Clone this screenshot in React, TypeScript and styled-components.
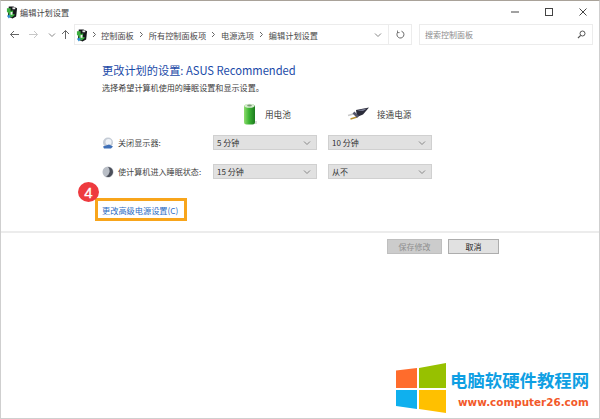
import React from 'react';
import styled, { createGlobalStyle } from 'styled-components';

const GlobalStyle = createGlobalStyle`
  html, body {
    margin: 0;
    padding: 0;
    background: #fff;
  }
  * {
    box-sizing: border-box;
  }
`;

const cjk = `"Noto Sans CJK SC", "Liberation Sans", sans-serif`;

const Window = styled.div`
  position: relative;
  width: 600px;
  height: 419px;
  overflow: hidden;
  background: #fff;
  border: 1px solid #cfcfcf;
  border-top-color: #a9a299;
  font-family: ${cjk};
  font-size: 8px;
  color: #333;
`;

const TitleBar = styled.div`
  display: flex;
  align-items: center;
  height: 21px;
  padding-left: 5px;
  gap: 2px;
  font-size: 8.2px;
  color: #444;
`;

const TitleText = styled.span`
  flex: 1;
`;

const WinButton = styled.div`
  display: flex;
  align-items: center;
  justify-content: center;
  width: 32px;
  height: 21px;
  svg {
    display: block;
  }
`;

const NavBar = styled.div`
  display: flex;
  align-items: center;
  height: 21px;
  margin-top: 2px;
`;

const NavArrows = styled.div`
  display: flex;
  align-items: center;
  width: 73px;
  padding-left: 7px;
`;

const NavArrow = styled.div<{ $w: number }>`
  display: flex;
  align-items: center;
  justify-content: center;
  width: ${(p) => p.$w}px;
`;

const AddressBox = styled.div`
  display: flex;
  align-items: center;
  width: 338px;
  height: 21px;
  padding-left: 1px;
  border: 1px solid #ececec;
`;

const Crumbs = styled.div`
  display: flex;
  flex: 1;
  align-items: center;
  color: #4a4a4a;
`;

const Crumb = styled.span`
  font-size: 8.2px;
  white-space: nowrap;
`;

const CrumbSep = styled.div<{ $first?: boolean }>`
  display: flex;
  justify-content: center;
  width: ${(p) => (p.$first ? 13 : 15)}px;
`;

const Chevron = styled.div`
  display: flex;
  justify-content: center;
  width: 20px;
`;

const Refresh = styled.div`
  display: flex;
  align-items: center;
  justify-content: center;
  width: 23px;
  height: 100%;
  border-left: 1px solid #ececec;
`;

const SearchBox = styled.div`
  display: flex;
  align-items: center;
  justify-content: space-between;
  width: 174px;
  height: 21px;
  margin-left: 7px;
  padding: 0 6px 0 5px;
  border: 1px solid #ececec;
  font-size: 8px;
  color: #8b8b8b;
`;

const Main = styled.main`
  padding: 17px 0 0 101px;
`;

const Heading = styled.h1`
  margin: 0;
  font-family: ${cjk};
  font-size: 11.2px;
  font-weight: 400;
  line-height: 16px;
  color: #1a4aa8;
`;

const Subtitle = styled.p`
  margin: 4px 0 0;
  font-size: 8.1px;
  line-height: 12px;
  color: #3c3c3c;
`;

const SettingsGrid = styled.div`
  display: grid;
  grid-template-columns: 100px 104px 104px;
  column-gap: 11px;
  margin-top: 9px;
`;

const Spacer = styled.div``;

const PowerHead = styled.div<{ $indent: number }>`
  display: flex;
  align-items: center;
  height: 22px;
  padding-left: ${(p) => p.$indent}px;
  gap: 7px;
  font-size: 8.6px;
  color: #444;
  white-space: nowrap;
`;

const RowLabel = styled.div<{ $first?: boolean }>`
  display: flex;
  align-items: center;
  height: 15px;
  margin-top: ${(p) => (p.$first ? 10 : 14)}px;
  gap: 4px;
  font-size: 8.1px;
  color: #444;
  white-space: nowrap;
`;

const Select = styled.div<{ $first?: boolean }>`
  display: flex;
  align-items: center;
  justify-content: space-between;
  height: 15px;
  margin-top: ${(p) => (p.$first ? 10 : 14)}px;
  padding: 0 5px 0 3px;
  background: #e1e1e1;
  border: 1px solid #d0d0d0;
  font-size: 8px;
  color: #333;
`;

const LinkBox = styled.div`
  position: relative;
  display: flex;
  align-items: center;
  width: 92px;
  height: 23px;
  margin: 19px 0 0 -7px;
  padding-left: 4px;
  border: 3px solid #f8a51b;
`;

const AdvancedLink = styled.a`
  font-size: 8.2px;
  color: #2b6cc4;
  white-space: nowrap;
`;

const Badge = styled.div`
  position: absolute;
  left: -20px;
  top: -19px;
  display: flex;
  align-items: center;
  justify-content: center;
  width: 21px;
  height: 20px;
  border-radius: 50%;
  background: #ee3a3f;
  color: #fff;
  font-family: "Liberation Sans", sans-serif;
  font-size: 15px;
  font-weight: 400;
  -webkit-text-stroke: 0.3px #fff;
`;

const Divider = styled.div`
  height: 2px;
  margin-top: 10px;
  background: #ececec;
`;

const Footer = styled.div`
  display: flex;
  justify-content: flex-end;
  gap: 6px;
  padding: 6px 100px 0 0;
`;

const Button = styled.button<{ $disabled?: boolean }>`
  width: ${(p) => (p.$disabled ? 55 : 51)}px;
  height: 15px;
  padding: 0;
  font-family: ${cjk};
  font-size: 8px;
  line-height: 13px;
  background: ${(p) => (p.$disabled ? '#cccccc' : '#e1e1e1')};
  border: 1px solid ${(p) => (p.$disabled ? '#bfbfbf' : '#adadad')};
  color: ${(p) => (p.$disabled ? '#8f8f8f' : '#222')};
`;

const Watermark = styled.div`
  position: absolute;
  right: 8px;
  bottom: 5px;
  display: flex;
  align-items: center;
  gap: 4px;
`;

const WatermarkText = styled.div`
  display: flex;
  flex-direction: column;
  width: 141px;
`;

const WatermarkTitle = styled.div`
  font-size: 17.4px;
  font-weight: 700;
  line-height: 22px;
  color: #0f9fe3;
  white-space: nowrap;
`;

const WatermarkUrl = styled.div`
  margin: 5px 0 0 8px;
  font-family: "DejaVu Sans", sans-serif;
  font-size: 10.4px;
  font-weight: 700;
  line-height: 12px;
  color: #f2592a;
  white-space: nowrap;
`;

const PowerIcon = () => (
  <svg width="12" height="14" viewBox="0 0 13 14">
    <path d="M3 1h5l4 2-1 9-4 2-5-2z" fill="#15171a" />
    <path d="M1 3h4v3l3-1-1 4 3 1-4 3-3-2V8L1 7z" fill="#3cae3f" />
    <path d="M7 2h3v2H7z" fill="#e8e8e8" />
    <path d="M5 7h2v3H5z" fill="#f4f4f4" />
    <path d="M1 11l3-1 1 2-2 2z" fill="#2f8fd0" />
  </svg>
);

const SmallChevron = ({ color = '#888' }: { color?: string }) => (
  <svg width="8" height="6" viewBox="0 0 8 6">
    <path d="M1 1.5L4 4.5 7 1.5" fill="none" stroke={color} strokeWidth="1" />
  </svg>
);

const CrumbArrow = () => (
  <svg width="5" height="7" viewBox="0 0 5 7">
    <path d="M1 1l2.5 2.5L1 6" fill="none" stroke="#666" strokeWidth="1" />
  </svg>
);

const Arrow = ({ color, flip, up }: { color: string; flip?: boolean; up?: boolean }) => (
  <svg
    width="11"
    height="11"
    viewBox="0 0 11 11"
    style={{ transform: up ? 'rotate(90deg)' : flip ? 'scaleX(-1)' : undefined }}
  >
    <path d="M10 5.5H1.5M5 2L1.5 5.5 5 9" fill="none" stroke={color} strokeWidth="1" />
  </svg>
);

const BatteryIcon = () => (
  <svg width="15" height="22" viewBox="0 0 15 22">
    <defs>
      <linearGradient id="batt" x1="0" x2="1" y1="0" y2="0">
        <stop offset="0" stopColor="#8fdc6e" />
        <stop offset="0.45" stopColor="#3db534" />
        <stop offset="1" stopColor="#1c7a1e" />
      </linearGradient>
    </defs>
    <rect x="1" y="1.5" width="11" height="20" rx="2.5" fill="url(#batt)" />
    <ellipse cx="6.5" cy="2.8" rx="5" ry="2" fill="#d6edcf" />
    <ellipse cx="6.5" cy="2.4" rx="2.4" ry="1" fill="#7d9a78" />
    <rect x="12" y="18" width="2" height="3" fill="#dcdcdc" />
  </svg>
);

const PlugIcon = () => (
  <svg width="23" height="17" viewBox="0 0 23 17">
    <path d="M9 4L22 1.5 16 8.5 10 11z" fill="#2b2c3a" />
    <path d="M10 4.5L20 2.5 16 5z" fill="#7c7f96" />
    <path d="M10 11L3.5 13" stroke="#b9912f" strokeWidth="1.4" />
    <path d="M8 7.5L1 9.5" stroke="#c9c9c9" strokeWidth="1.4" />
    <path d="M6.5 6.5L11 11" stroke="#55566a" strokeWidth="2.6" />
  </svg>
);

const MonitorIcon = () => (
  <svg width="12" height="12" viewBox="0 0 12 12">
    <circle cx="6" cy="5.5" r="5" fill="#c5ccd6" />
    <circle cx="6.5" cy="5" r="3" fill="#eef2f7" />
    <path d="M1 9.5L7 7.5 11 9.5 9 11.5H2z" fill="#3f70b8" />
  </svg>
);

const SleepIcon = () => (
  <svg width="12" height="12" viewBox="0 0 12 12">
    <circle cx="6" cy="6" r="5.5" fill="#b9bec6" />
    <path d="M6 1a5 5 0 1 1-2 9.6A6 6 0 0 0 6 1z" fill="#4b4f5a" />
  </svg>
);

const WindowsLogo = () => (
  <svg width="50" height="50" viewBox="0 0 50 50">
    <path d="M0 7.5L21 5V25H0z" fill="#ff6c2c" />
    <path d="M23 5L50 0V25H23z" fill="#97c100" />
    <path d="M0 27H21V46L0 43z" fill="#0fb0ee" />
    <path d="M23 27H50V50L23 46z" fill="#ffc000" />
  </svg>
);

const App = () => {
  return (
    <>
      <GlobalStyle />
      <Window>
        <TitleBar>
          <PowerIcon />
          <TitleText>编辑计划设置</TitleText>
          <WinButton>
            <svg width="8" height="2" viewBox="0 0 8 2">
              <path d="M0 1h8" stroke="#444" strokeWidth="1" />
            </svg>
          </WinButton>
          <WinButton>
            <svg width="8" height="8" viewBox="0 0 8 8">
              <rect x="0.5" y="0.5" width="7" height="7" fill="none" stroke="#444" />
            </svg>
          </WinButton>
          <WinButton>
            <svg width="8" height="8" viewBox="0 0 8 8">
              <path d="M0.5 0.5l7 7M7.5 0.5l-7 7" stroke="#444" strokeWidth="1" />
            </svg>
          </WinButton>
        </TitleBar>

        <NavBar>
          <NavArrows>
            <NavArrow $w={12}>
              <Arrow color="#666" />
            </NavArrow>
            <NavArrow $w={27}>
              <Arrow color="#c8c8c8" flip />
            </NavArrow>
            <NavArrow $w={10}>
              <SmallChevron />
            </NavArrow>
            <NavArrow $w={17}>
              <Arrow color="#666" up />
            </NavArrow>
          </NavArrows>
          <AddressBox>
            <PowerIcon />
            <Crumbs>
              <CrumbSep $first>
                <CrumbArrow />
              </CrumbSep>
              <Crumb>控制面板</Crumb>
              <CrumbSep>
                <CrumbArrow />
              </CrumbSep>
              <Crumb>所有控制面板项</Crumb>
              <CrumbSep>
                <CrumbArrow />
              </CrumbSep>
              <Crumb>电源选项</Crumb>
              <CrumbSep>
                <CrumbArrow />
              </CrumbSep>
              <Crumb>编辑计划设置</Crumb>
            </Crumbs>
            <Chevron>
              <SmallChevron />
            </Chevron>
            <Refresh>
              <svg width="9" height="9" viewBox="0 0 9 9">
                <path d="M5.5 1.2A3.5 3.5 0 1 1 2 2" fill="none" stroke="#666" strokeWidth="1" />
                <path d="M1.5 0.5V2.6H3.6" fill="none" stroke="#666" strokeWidth="0.8" />
              </svg>
            </Refresh>
          </AddressBox>
          <SearchBox>
            <span>搜索控制面板</span>
            <svg width="9" height="9" viewBox="0 0 9 9">
              <circle cx="5.5" cy="3.5" r="2.5" fill="none" stroke="#555" strokeWidth="1" />
              <path d="M3.7 5.3L1 8" stroke="#555" strokeWidth="1.2" />
            </svg>
          </SearchBox>
        </NavBar>

        <Main>
          <Heading>更改计划的设置: ASUS Recommended</Heading>
          <Subtitle>选择希望计算机使用的睡眠设置和显示设置。</Subtitle>
          <SettingsGrid>
            <Spacer />
            <PowerHead $indent={30}>
              <BatteryIcon />
              用电池
            </PowerHead>
            <PowerHead $indent={19}>
              <PlugIcon />
              接通电源
            </PowerHead>

            <RowLabel $first>
              <MonitorIcon />
              关闭显示器:
            </RowLabel>
            <Select $first>
              5 分钟
              <SmallChevron />
            </Select>
            <Select $first>
              10 分钟
              <SmallChevron />
            </Select>

            <RowLabel>
              <SleepIcon />
              使计算机进入睡眠状态:
            </RowLabel>
            <Select>
              15 分钟
              <SmallChevron />
            </Select>
            <Select>
              从不
              <SmallChevron />
            </Select>
          </SettingsGrid>
          <LinkBox>
            <Badge>4</Badge>
            <AdvancedLink>更改高级电源设置(C)</AdvancedLink>
          </LinkBox>
        </Main>

        <Divider />
        <Footer>
          <Button $disabled>保存修改</Button>
          <Button>取消</Button>
        </Footer>

        <Watermark>
          <WindowsLogo />
          <WatermarkText>
            <WatermarkTitle>电脑软硬件教程网</WatermarkTitle>
            <WatermarkUrl>www.computer26.com</WatermarkUrl>
          </WatermarkText>
        </Watermark>
      </Window>
    </>
  );
};

export default App;
